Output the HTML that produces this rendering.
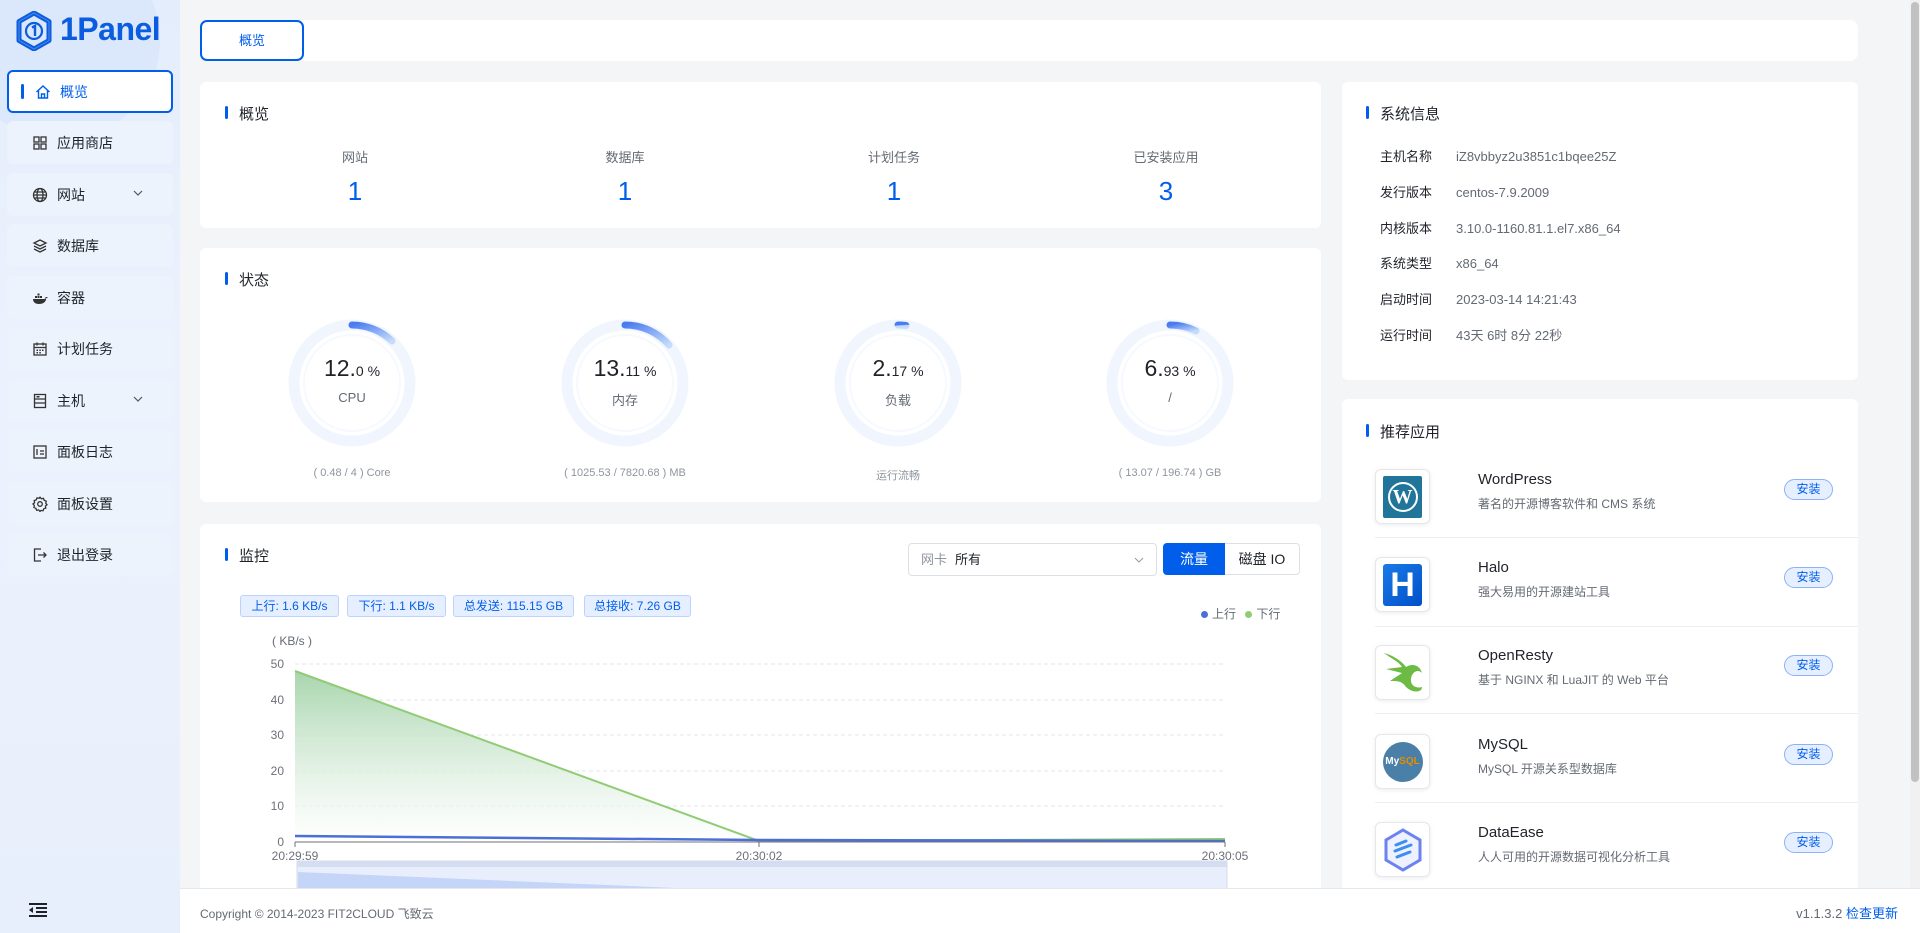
<!DOCTYPE html>
<html><head><meta charset="utf-8"><style>
*{box-sizing:border-box;margin:0;padding:0}
body{width:1920px;height:933px;overflow:hidden;background:#f4f5f7;font-family:"Liberation Sans","Noto Sans CJK SC",sans-serif;color:#1f2329;position:relative}
.a{position:absolute}
#side{left:0;top:0;width:180px;height:933px;background:linear-gradient(180deg,#e4edfc 0%,#ecf2fd 40%,#e8effc 100%)}
.mi{position:absolute;left:7px;width:166px;height:43px;background:#edf3fd;border-radius:6px;font-size:14px;color:#1f2329;display:flex;align-items:center;padding-left:25px}
.mi svg{width:16px;height:16px;margin-right:9px;flex:none}
.mi .ch{position:absolute;right:20px;top:14px;width:12px;height:12px}
.mi.act{background:#fff;border:2px solid #005eeb;color:#005eeb;padding-left:23px}
.card{position:absolute;background:#fff;border-radius:6px}
.tt{position:absolute;font-size:15px;color:#1f2329;padding-left:14px}
.tt:before{content:"";position:absolute;left:0;top:3px;width:3px;height:13px;background:#005eeb;border-radius:2px}
.st{position:absolute;width:200px;text-align:center;margin-left:-100px}
.st .l{font-size:13px;color:#646a73}
.st .n{font-size:26px;color:#005eeb;margin-top:10px}
.g{position:absolute;width:200px;margin-left:-100px;text-align:center}
.row{position:absolute;left:1380px;width:400px;height:20px;font-size:13px;line-height:20px;color:#1f2329;white-space:nowrap}
.row b{font-weight:normal;position:absolute;left:0;top:0;line-height:20px}
.row span{position:absolute;left:76px;top:0;line-height:20px;color:#646a73;white-space:nowrap}
.tag{position:absolute;top:595px;height:22px;background:#e6efff;border:1px solid #bcd4fb;border-radius:3px;color:#005eeb;font-size:12px;line-height:20px;text-align:center}
.app{position:absolute;left:1375px;width:483px}
.ic{position:absolute;left:0;top:0;width:55px;height:55px;border:1px solid #e5e7eb;border-radius:6px;box-shadow:0 1px 4px rgba(0,0,0,.08);background:#fff;display:flex;align-items:center;justify-content:center}
.an{position:absolute;left:103px;top:2px;font-size:15px;color:#1f2329}
.ad{position:absolute;left:103px;top:26px;font-size:12px;color:#646a73;white-space:nowrap}
.ib{position:absolute;left:409px;top:10px;width:49px;height:21px;border:1px solid #8cb3f5;background:#e6efff;border-radius:11px;color:#005eeb;font-size:12px;text-align:center;line-height:19px}
.hr{position:absolute;left:1375px;width:483px;height:1px;background:#eceef1}
</style></head><body>
<div id="side" class="a">
 <div class="a" style="left:-40px;top:-60px;width:200px;height:200px;border-radius:50%;background:rgba(210,225,250,.5)"></div>
 <svg class="a" style="left:16px;top:11px" width="36" height="40" viewBox="0 0 36 40"><polygon points="18,2 33,10.5 33,29.5 18,38 3,29.5 3,10.5" fill="none" stroke="#0a5ce0" stroke-width="5" stroke-linejoin="round"/><polygon points="18,2 33,10.5 33,29.5 18,38 3,29.5 3,10.5" fill="none" stroke="#7fa8f0" stroke-width="1" opacity=".6"/><circle cx="18" cy="20" r="8" fill="none" stroke="#0a5ce0" stroke-width="2.2"/><path d="M16 16.5l3-1.5v10" stroke="#0a5ce0" stroke-width="2.4" fill="none"/></svg>
 <div class="a" style="left:60px;top:11px;font-size:32px;font-weight:bold;color:#0a5ce0;letter-spacing:-0.5px">1Panel</div>
 <div class="mi act" style="top:70px"><span style="position:absolute;left:12px;top:12px;width:3px;height:15px;background:#005eeb;border-radius:2px"></span><svg viewBox="0 0 16 16" style="margin-left:3px"><path d="M1.5 8L8 2l6.5 6M3.5 6.5V14h9V6.5M6.5 14v-4h3v4" fill="none" stroke="#005eeb" stroke-width="1.4"/></svg>概览</div>
 <div class="mi" style="top:121px"><svg viewBox="0 0 16 16"><g fill="none" stroke="#333" stroke-width="1.3"><rect x="2" y="2" width="5" height="5"/><rect x="9" y="2" width="5" height="5"/><rect x="2" y="9" width="5" height="5"/><rect x="9" y="9" width="5" height="5"/></g></svg>应用商店</div>
 <div class="mi" style="top:173px"><svg viewBox="0 0 16 16"><g fill="none" stroke="#333" stroke-width="1.3"><circle cx="8" cy="8" r="6.5"/><ellipse cx="8" cy="8" rx="3" ry="6.5"/><path d="M1.5 8h13M2.5 5h11M2.5 11h11"/></g></svg>网站<svg class="ch" viewBox="0 0 12 12"><path d="M2 4l4 4 4-4" fill="none" stroke="#555" stroke-width="1.2"/></svg></div>
 <div class="mi" style="top:224px"><svg viewBox="0 0 16 16"><g fill="none" stroke="#333" stroke-width="1.3"><path d="M8 2l6 3-6 3-6-3z"/><path d="M2 8l6 3 6-3M2 11l6 3 6-3"/></g></svg>数据库</div>
 <div class="mi" style="top:276px"><svg viewBox="0 0 16 16"><path d="M1 9h13c0 3-3 5-7 5S1 12 1 9z" fill="#333"/><g fill="#333"><rect x="3" y="6" width="2" height="2"/><rect x="5.5" y="6" width="2" height="2"/><rect x="8" y="6" width="2" height="2"/><rect x="5.5" y="3.5" width="2" height="2"/></g><path d="M13 8.5c1-1 2-1 2.5-.8" stroke="#333" fill="none"/></svg>容器</div>
 <div class="mi" style="top:327px"><svg viewBox="0 0 16 16"><g fill="none" stroke="#333" stroke-width="1.3"><rect x="2" y="3" width="12" height="11"/><path d="M2 6.5h12M5 1.5v3M11 1.5v3"/></g><g fill="#333"><rect x="4.5" y="8.5" width="1.5" height="1.5"/><rect x="7.3" y="8.5" width="1.5" height="1.5"/><rect x="10" y="8.5" width="1.5" height="1.5"/><rect x="4.5" y="11" width="1.5" height="1.5"/><rect x="7.3" y="11" width="1.5" height="1.5"/></g></svg>计划任务</div>
 <div class="mi" style="top:379px"><svg viewBox="0 0 16 16"><g fill="none" stroke="#333" stroke-width="1.3"><rect x="2.5" y="1.5" width="11" height="13"/><path d="M2.5 6h11M2.5 10h11"/></g><rect x="4.5" y="3" width="3" height="1.5" fill="#333"/></svg>主机<svg class="ch" viewBox="0 0 12 12"><path d="M2 4l4 4 4-4" fill="none" stroke="#555" stroke-width="1.2"/></svg></div>
 <div class="mi" style="top:430px"><svg viewBox="0 0 16 16"><g fill="none" stroke="#333" stroke-width="1.3"><rect x="2" y="2" width="12" height="12"/><path d="M5 5v6M8 7h4M8 10h4"/></g></svg>面板日志</div>
 <div class="mi" style="top:482px"><svg viewBox="0 0 16 16"><g fill="none" stroke="#333" stroke-width="1.3"><circle cx="8" cy="8" r="2.3"/><path d="M8 1.2l1.4 1.6 2.1-.4.7 2 2 .8-.4 2.1L15 8.8l-1.6 1.2.4 2.1-2 .7-.8 2-2.1-.4L8 15.5l-1.3-1.6-2.1.4-.7-2-2-.8.4-2.1L1 8l1.6-1.3-.4-2.1 2-.7.8-2 2.1.4z"/></g></svg>面板设置</div>
 <div class="mi" style="top:533px"><svg viewBox="0 0 16 16"><g fill="none" stroke="#333" stroke-width="1.3"><path d="M9 2H2.5v12H9M6 8h8M11.5 5.5L14 8l-2.5 2.5"/></g></svg>退出登录</div>
 <svg class="a" style="left:29px;top:903px" width="18" height="14" viewBox="0 0 18 14"><g stroke="#1f2329" stroke-width="2"><path d="M0 1h18M7 5h11M7 9h11M0 13h18"/></g><path d="M0 7l4-3v6z" fill="#1f2329"/></svg>
</div>

<div class="card" style="left:200px;top:20px;width:1658px;height:41px;border-radius:8px"></div>
<div class="a" style="left:200px;top:20px;width:104px;height:41px;border:2px solid #005eeb;border-radius:7px;color:#005eeb;font-size:13px;text-align:center;line-height:37px">概览</div>

<div class="card" style="left:200px;top:82px;width:1121px;height:146px"></div>
<div class="tt" style="left:225px;top:103px">概览</div>
<div class="st" style="left:355px;top:147px"><div class="l">网站</div><div class="n">1</div></div>
<div class="st" style="left:625px;top:147px"><div class="l">数据库</div><div class="n">1</div></div>
<div class="st" style="left:894px;top:147px"><div class="l">计划任务</div><div class="n">1</div></div>
<div class="st" style="left:1166px;top:147px"><div class="l">已安装应用</div><div class="n">3</div></div>

<div class="card" style="left:200px;top:248px;width:1121px;height:254px"></div>
<div class="tt" style="left:225px;top:269px">状态</div>
<svg class="a" style="left:200px;top:248px" width="1121" height="254">
 <defs><linearGradient id="gg" x1="0" y1="0" x2="1" y2="1"><stop offset="0" stop-color="#4a7cf0"/><stop offset="1" stop-color="#c6dcfb"/></linearGradient></defs>
 <g fill="none">
  <g transform="translate(152,135)"><circle r="58" stroke="#f1f6fe" stroke-width="11"/><circle r="48" stroke="#f6f9fe" stroke-width="2"/><path d="M0-58A58 58 0 0 1 40-42" stroke="url(#gg)" stroke-width="7" stroke-linecap="round"/></g>
  <g transform="translate(425,135)"><circle r="58" stroke="#f1f6fe" stroke-width="11"/><circle r="48" stroke="#f6f9fe" stroke-width="2"/><path d="M0-58A58 58 0 0 1 44-38" stroke="url(#gg)" stroke-width="7" stroke-linecap="round"/></g>
  <g transform="translate(698,135)"><circle r="58" stroke="#f1f6fe" stroke-width="11"/><circle r="48" stroke="#f6f9fe" stroke-width="2"/><path d="M0-58A58 58 0 0 1 8-57.5" stroke="url(#gg)" stroke-width="7" stroke-linecap="round"/></g>
  <g transform="translate(970,135)"><circle r="58" stroke="#f1f6fe" stroke-width="11"/><circle r="48" stroke="#f6f9fe" stroke-width="2"/><path d="M0-58A58 58 0 0 1 26-52" stroke="url(#gg)" stroke-width="7" stroke-linecap="round"/></g>
 </g>
</svg>
<div class="g" style="left:352px;top:355px"><span style="font-size:23px">12.</span><span style="font-size:14px">0 %</span><div style="font-size:13px;color:#646a73;margin-top:8px">CPU</div></div>
<div class="g" style="left:625px;top:355px"><span style="font-size:23px">13.</span><span style="font-size:14px">11 %</span><div style="font-size:13px;color:#646a73;margin-top:8px">内存</div></div>
<div class="g" style="left:898px;top:355px"><span style="font-size:23px">2.</span><span style="font-size:14px">17 %</span><div style="font-size:13px;color:#646a73;margin-top:8px">负载</div></div>
<div class="g" style="left:1170px;top:355px"><span style="font-size:23px">6.</span><span style="font-size:14px">93 %</span><div style="font-size:13px;color:#646a73;margin-top:8px">/</div></div>
<div class="g" style="left:352px;top:467px;font-size:11px;color:#8f959e">( 0.48 / 4 ) Core</div>
<div class="g" style="left:625px;top:467px;font-size:11px;color:#8f959e">( 1025.53 / 7820.68 ) MB</div>
<div class="g" style="left:898px;top:467px;font-size:11px;color:#8f959e">运行流畅</div>
<div class="g" style="left:1170px;top:467px;font-size:11px;color:#8f959e">( 13.07 / 196.74 ) GB</div>

<div class="card" style="left:200px;top:524px;width:1121px;height:380px"></div>
<div class="tt" style="left:225px;top:545px">监控</div>
<div class="a" style="left:908px;top:543px;width:249px;height:33px;border:1px solid #dcdfe6;border-radius:4px;font-size:13px;line-height:31px;padding-left:12px;color:#1f2329"><span style="color:#8f959e;margin-right:8px">网卡</span>所有<svg class="a" style="right:12px;top:11px" width="10" height="10" viewBox="0 0 10 10"><path d="M1 3l4 4 4-4" fill="none" stroke="#999"/></svg></div>
<div class="a" style="left:1163px;top:543px;width:62px;height:32px;background:#005eeb;color:#fff;font-size:14px;text-align:center;line-height:32px;border-radius:4px 0 0 4px">流量</div>
<div class="a" style="left:1225px;top:543px;width:75px;height:32px;border:1px solid #dcdfe6;border-left:none;color:#1f2329;font-size:14px;text-align:center;line-height:30px;border-radius:0 4px 4px 0">磁盘 IO</div>
<div class="tag" style="left:240px;width:99px">上行: 1.6 KB/s</div>
<div class="tag" style="left:347px;width:99px">下行: 1.1 KB/s</div>
<div class="tag" style="left:453px;width:121px">总发送: 115.15 GB</div>
<div class="tag" style="left:584px;width:107px">总接收: 7.26 GB</div>
<div class="a" style="left:1201px;top:605px;font-size:12px;color:#646a73"><span style="display:inline-block;width:7px;height:7px;border-radius:50%;background:#4b6fd6;margin-right:4px"></span>上行 <span style="display:inline-block;width:7px;height:7px;border-radius:50%;background:#91cc75;margin:0 4px 0 6px"></span>下行</div>
<svg class="a" style="left:200px;top:620px" width="1121" height="270">
 <defs><linearGradient id="gf" x1="0" y1="0" x2="0" y2="1"><stop offset="0" stop-color="#a8d5ad"/><stop offset="1" stop-color="#ffffff" stop-opacity=".6"/></linearGradient></defs>
 <text x="72" y="25" font-size="12" fill="#646a73" font-family="Liberation Sans">( KB/s )</text>
 <g stroke="#e0e6f1" stroke-dasharray="4,3"><path d="M95 44H1025M95 80H1025M95 115H1025M95 151H1025M95 186H1025"/></g>
 <g font-size="12" fill="#6e7079" text-anchor="end" font-family="Liberation Sans"><text x="84" y="48">50</text><text x="84" y="84">40</text><text x="84" y="119">30</text><text x="84" y="155">20</text><text x="84" y="190">10</text><text x="84" y="226">0</text></g>
 <path d="M95 51L559 221L1025 219V222H95z" fill="url(#gf)"/>
 <path d="M95 51L559 221L1025 219" stroke="#91cc75" stroke-width="2" fill="none"/>
 <path d="M95 216L559 220L1025 221" stroke="#4b6fd6" stroke-width="2.5" fill="none"/>
 <path d="M95 222H1025" stroke="#6e7079"/>
 <path d="M95 222v5M559 222v5M1025 222v5" stroke="#6e7079"/>
 <g font-size="12" fill="#6e7079" text-anchor="middle" font-family="Liberation Sans"><text x="95" y="240">20:29:59</text><text x="559" y="240">20:30:02</text><text x="1025" y="240">20:30:05</text></g>
 <rect x="97" y="241" width="930" height="28" fill="#e8eefc" stroke="#d2dbee"/>
 <rect x="97" y="241" width="930" height="6" fill="#d5def0"/>
 <path d="M98 252L500 269H98z" fill="#c5d5f8"/>
</svg>

<div class="card" style="left:1342px;top:82px;width:516px;height:298px"></div>
<div class="tt" style="left:1366px;top:103px">系统信息</div>
<div class="row" style="top:147px"><b>主机名称</b><span>iZ8vbbyz2u3851c1bqee25Z</span></div>
<div class="row" style="top:183px"><b>发行版本</b><span>centos-7.9.2009</span></div>
<div class="row" style="top:219px"><b>内核版本</b><span>3.10.0-1160.81.1.el7.x86_64</span></div>
<div class="row" style="top:254px"><b>系统类型</b><span>x86_64</span></div>
<div class="row" style="top:290px"><b>启动时间</b><span>2023-03-14 14:21:43</span></div>
<div class="row" style="top:326px"><b>运行时间</b><span>43天 6时 8分 22秒</span></div>

<div class="card" style="left:1342px;top:399px;width:516px;height:500px"></div>
<div class="tt" style="left:1366px;top:421px">推荐应用</div>
<div class="app" style="top:469px"><div class="ic"><div style="width:39px;height:42px;background:#21759b;border-radius:2px;display:flex;align-items:center;justify-content:center"><div style="width:30px;height:30px;border-radius:50%;border:2px solid #fff;color:#fff;font:bold 20px 'Liberation Serif',serif;text-align:center;line-height:27px">W</div></div></div><div class="an">WordPress</div><div class="ad">著名的开源博客软件和 CMS 系统</div><div class="ib">安装</div></div>
<div class="hr" style="top:537px"></div>
<div class="app" style="top:557px"><div class="ic"><div style="width:39px;height:42px;background:linear-gradient(135deg,#1a7ae8,#0050c8);border-radius:3px;color:#fff;font:bold 34px 'Liberation Sans',sans-serif;text-align:center;line-height:42px">H</div></div><div class="an">Halo</div><div class="ad">强大易用的开源建站工具</div><div class="ib">安装</div></div>
<div class="hr" style="top:626px"></div>
<div class="app" style="top:645px"><div class="ic"><svg width="42" height="44" viewBox="0 0 42 44"><path d="M2 2C10 8 16 10 20 16L4 18 20 22 8 30C16 30 20 30 24 36 30 42 40 42 40 36 34 38 26 34 30 24 34 18 38 20 40 22 38 14 30 12 24 16 20 10 10 4 2 2z" fill="#6dbb45"/></svg></div><div class="an">OpenResty</div><div class="ad">基于 NGINX 和 LuaJIT 的 Web 平台</div><div class="ib">安装</div></div>
<div class="hr" style="top:713px"></div>
<div class="app" style="top:734px"><div class="ic"><div style="width:40px;height:40px;border-radius:50%;background:#4a7fa7;color:#fff;font:bold 10px 'Liberation Sans',sans-serif;text-align:center;line-height:40px">My<span style="color:#e48e00">SQL</span></div></div><div class="an">MySQL</div><div class="ad">MySQL 开源关系型数据库</div><div class="ib">安装</div></div>
<div class="hr" style="top:802px"></div>
<div class="app" style="top:822px"><div class="ic"><svg width="40" height="44" viewBox="0 0 40 44"><polygon points="20,2 37,12 37,32 20,42 3,32 3,12" fill="#eef1ff" stroke="#6b82f0" stroke-width="3"/><g stroke="#3d8ef0" stroke-width="3" stroke-linecap="round"><path d="M13 17l10-4M12 23l16-6M14 29l13-5"/></g></svg></div><div class="an">DataEase</div><div class="ad">人人可用的开源数据可视化分析工具</div><div class="ib">安装</div></div>

<div class="a" style="left:180px;top:888px;width:1740px;height:45px;background:#fff;border-top:1px solid #e4e7ed"></div>
<div class="a" style="left:200px;top:905px;font-size:12px;color:#646a73">Copyright © 2014-2023 FIT2CLOUD 飞致云</div>
<div class="a" style="right:22px;top:903px;font-size:13px;color:#646a73">v1.1.3.2 <span style="color:#005eeb">检查更新</span></div>
<div class="a" style="left:1910px;top:0;width:10px;height:888px;background:#f1f1f1"></div>
<div class="a" style="left:1911px;top:2px;width:8px;height:780px;background:#c1c1c1;border-radius:4px"></div>
</body></html>
